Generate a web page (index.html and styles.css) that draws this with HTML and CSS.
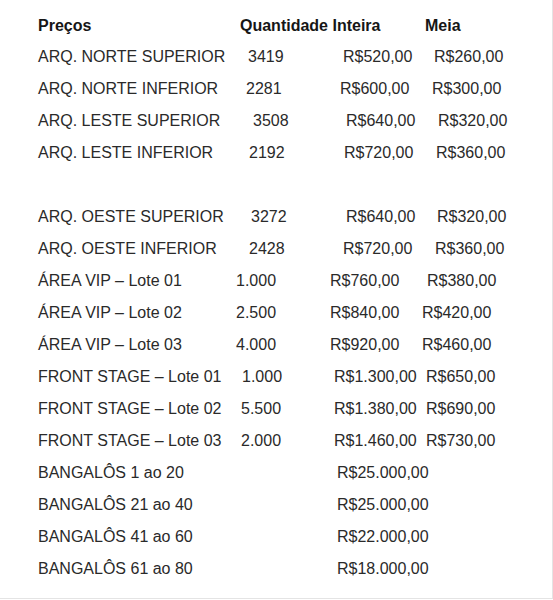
FILE: index.html
```html
<!DOCTYPE html>
<html lang="pt-BR">
<head>
<meta charset="utf-8">
<title>Preços</title>
<link rel="stylesheet" href="styles.css">
</head>
<body>
<div class="sheet">
  <div class="row head">
    <span>Preços</span><span>Quantidade Inteira</span><span>Meia</span>
  </div>
  <div class="row arq-ns"><span>ARQ. NORTE SUPERIOR</span><span>3419</span><span>R$520,00</span><span>R$260,00</span></div>
  <div class="row arq-ni"><span>ARQ. NORTE INFERIOR</span><span>2281</span><span>R$600,00</span><span>R$300,00</span></div>
  <div class="row arq-ls"><span>ARQ. LESTE SUPERIOR</span><span>3508</span><span>R$640,00</span><span>R$320,00</span></div>
  <div class="row arq-li"><span>ARQ. LESTE INFERIOR</span><span>2192</span><span>R$720,00</span><span>R$360,00</span></div>
  <div class="row blank"></div>
  <div class="row arq-os"><span>ARQ. OESTE SUPERIOR</span><span>3272</span><span>R$640,00</span><span>R$320,00</span></div>
  <div class="row arq-oi"><span>ARQ. OESTE INFERIOR</span><span>2428</span><span>R$720,00</span><span>R$360,00</span></div>
  <div class="row vip-1"><span>ÁREA VIP – Lote 01</span><span>1.000</span><span>R$760,00</span><span>R$380,00</span></div>
  <div class="row vip-2"><span>ÁREA VIP – Lote 02</span><span>2.500</span><span>R$840,00</span><span>R$420,00</span></div>
  <div class="row vip-3"><span>ÁREA VIP – Lote 03</span><span>4.000</span><span>R$920,00</span><span>R$460,00</span></div>
  <div class="row fs-1"><span>FRONT STAGE – Lote 01</span><span>1.000</span><span>R$1.300,00</span><span>R$650,00</span></div>
  <div class="row fs-2"><span>FRONT STAGE – Lote 02</span><span>5.500</span><span>R$1.380,00</span><span>R$690,00</span></div>
  <div class="row fs-3"><span>FRONT STAGE – Lote 03</span><span>2.000</span><span>R$1.460,00</span><span>R$730,00</span></div>
  <div class="row bang"><span>BANGALÔS 1 ao 20</span><span>R$25.000,00</span></div>
  <div class="row bang"><span>BANGALÔS 21 ao 40</span><span>R$25.000,00</span></div>
  <div class="row bang"><span>BANGALÔS 41 ao 60</span><span>R$22.000,00</span></div>
  <div class="row bang"><span>BANGALÔS 61 ao 80</span><span>R$18.000,00</span></div>
</div>
</body>
</html>
```
FILE: styles.css
```css
html, body {
  margin: 0;
  padding: 0;
  background: #ffffff;
}

.sheet {
  box-sizing: border-box;
  width: 553px;
  height: 599px;
  padding: 11px 0 0 38px;
  border-right: 1px solid #e4e4e4;
  border-bottom: 1px solid #e4e4e4;
  font-family: "Liberation Sans", Arial, sans-serif;
  font-size: 16px;
  color: #2a2a2a;
}

.row {
  display: grid;
  grid-template-columns: var(--q, 210px) var(--i, 95px) var(--m, 91px) auto;
  height: 32px;
  line-height: 32px;
  white-space: nowrap;
}

.row > span {
  white-space: nowrap;
}

.head {
  --q: 202px;
  --i: 185px;
  height: 30px;
  line-height: 30px;
  font-weight: bold;
  color: #161616;
}

.blank { height: 32px; }

.arq-ns { --q: 210px; --i: 95px; --m: 91px; }
.arq-ni { --q: 208px; --i: 94px; --m: 92px; }
.arq-ls { --q: 215px; --i: 93px; --m: 92px; }
.arq-li { --q: 211px; --i: 95px; --m: 92px; }
.arq-os { --q: 213px; --i: 95px; --m: 91px; }
.arq-oi { --q: 211px; --i: 94px; --m: 92px; }
.vip-1 { --q: 198px; --i: 94px; --m: 97px; }
.vip-2 { --q: 198px; --i: 94px; --m: 92px; }
.vip-3 { --q: 198px; --i: 94px; --m: 92px; }
.fs-1 { --q: 204px; --i: 92px; --m: 92px; }
.fs-2 { --q: 203px; --i: 93px; --m: 92px; }
.fs-3 { --q: 203px; --i: 93px; --m: 92px; }

.bang {
  grid-template-columns: 299px auto;
}
```
